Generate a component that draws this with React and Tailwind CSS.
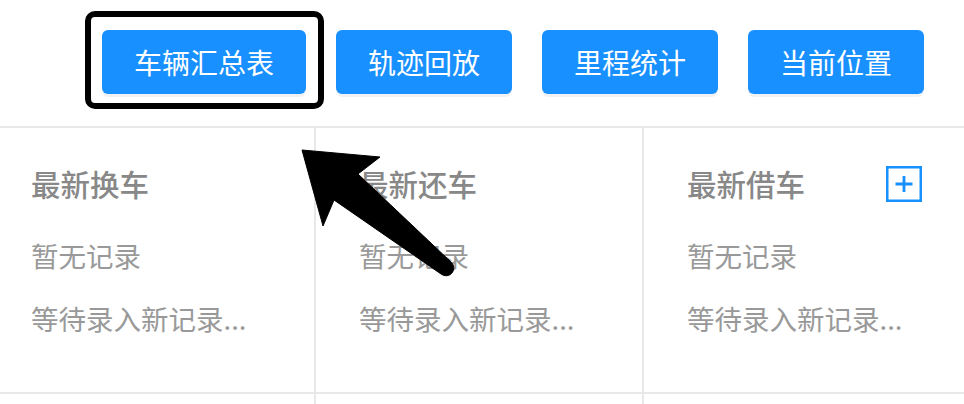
import React from "react";

const TABS = ["车辆汇总表", "轨迹回放", "里程统计", "当前位置"];

const CARDS = [
  { title: "最新换车", add: false },
  { title: "最新还车", add: false },
  { title: "最新借车", add: true },
];

function PlusBox() {
  return (
    <svg width="36" height="36" viewBox="0 0 36 36" className="shrink-0">
      <rect x="1.25" y="1.25" width="33.5" height="33.5" fill="none" stroke="#1890ff" strokeWidth="2.5" />
      <path d="M9.5 18h17M18 10v16" stroke="#1890ff" strokeWidth="2.8" />
    </svg>
  );
}

export default function App() {
  return (
    <div
      className="relative w-[964px] h-[404px] overflow-hidden bg-white"
      style={{ fontFamily: '"Noto Sans CJK SC", "Noto Sans", sans-serif' }}
    >
      {/* Top tabs */}
      <div className="h-[128px] border-b-2 border-[#e8e8e8] flex justify-end items-start gap-[30px] pt-[30px] pr-[40px]">
        {TABS.map((t, i) => (
          <div key={t} className="relative">
            <button className="h-[64px] px-8 rounded-[6px] bg-[#1890ff] text-white text-[28px] leading-none shadow-[0_3px_0_rgba(0,0,0,0.05)]">
              {t}
            </button>
            {i === 0 && (
              <div className="absolute left-[-17px] right-[-18px] top-[-19px] bottom-[-15px] border-[6px] border-black rounded-[10px]"></div>
            )}
          </div>
        ))}
      </div>

      {/* Cards */}
      <div className="flex ml-[-14px]">
        {CARDS.map((c) => (
          <div key={c.title} className="w-[328px] shrink-0 border-l-2 border-[#e8e8e8]">
            <div className="h-[266px] border-b-2 border-[#e8e8e8] pl-[43px] pr-[48px] pt-[38px]">
              <div className="flex items-center justify-between h-[36px]">
                <span className="text-[29.5px] leading-none font-medium text-[#888888]">{c.title}</span>
                {c.add && <PlusBox />}
              </div>
              <div className="mt-[35px] text-[27.5px] leading-[36px] text-[#999999]">暂无记录</div>
              <div className="mt-[27px] text-[27.5px] leading-[36px] text-[#999999]">等待录入新记录...</div>
            </div>
            <div className="h-[20px]"></div>
          </div>
        ))}
      </div>

      {/* annotation arrow */}
      <svg className="absolute left-0 top-0 pointer-events-none" width="964" height="404">
        <path
          d="M302 150 L380 157 L358 174 L451 262 A7.5 7.5 0 0 1 441 274 L334 200 L323 226 Z"
          fill="#000"
          stroke="#000"
          strokeWidth="1"
          strokeLinejoin="round"
        />
      </svg>
    </div>
  );
}
